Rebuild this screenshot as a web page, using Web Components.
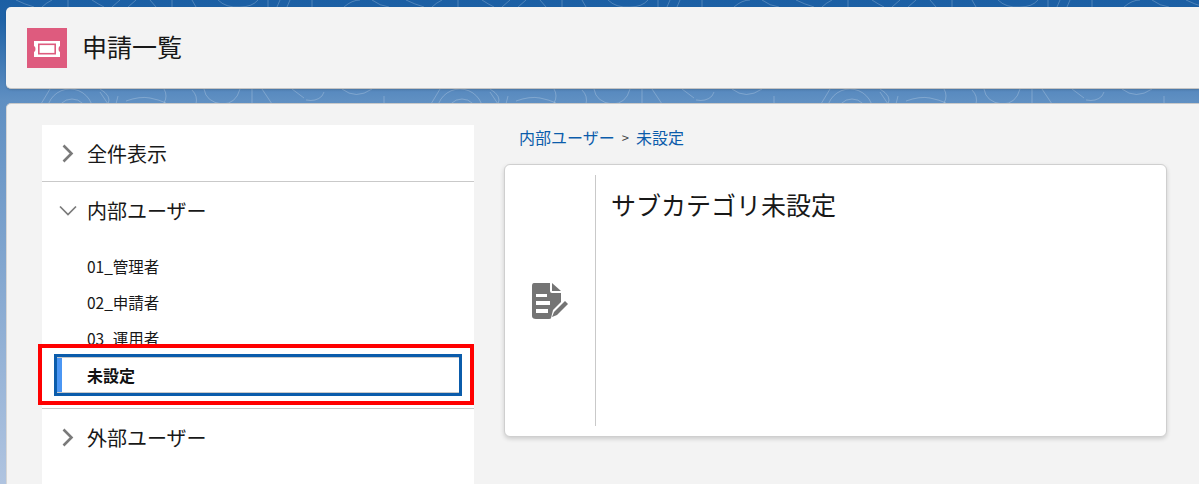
<!DOCTYPE html>
<html lang="ja">
<head>
<meta charset="utf-8">
<title>申請一覧</title>
<style>
  html, body { margin: 0; height: 484px; overflow: hidden; }
  body { font-family: "Noto Sans CJK JP", "Liberation Sans", sans-serif; color: #181818; }
</style>
</head>
<body>
<app-shell>
  <page-header slot="header" title-text="申請一覧"></page-header>
  <tree-nav slot="nav">
    <tree-group label="全件表示"></tree-group>
    <tree-group label="内部ユーザー" open>
      <tree-item>01_管理者</tree-item>
      <tree-item>02_申請者</tree-item>
      <tree-item>03_運用者</tree-item>
      <tree-item selected>未設定</tree-item>
    </tree-group>
    <tree-group label="外部ユーザー"></tree-group>
  </tree-nav>
  <bread-crumbs slot="content" parent="内部ユーザー" current="未設定"></bread-crumbs>
  <info-card slot="content" heading="サブカテゴリ未設定"></info-card>
</app-shell>

<script>
"use strict"
class AppShell extends HTMLElement {
    constructor() {
        super();
        this._root = this.attachShadow({ mode: "open" });
    }
    connectedCallback() {
        this._root.innerHTML = `
        <style>
            :host {
                display: block;
                position: relative;
                height: 484px;
                overflow: hidden;
                background: linear-gradient(180deg, #1b5fa4 0, #1f62a6 20px, #5f8fc2 100px, #b0c4e0 484px);
            }
            .bg { position: absolute; left: 0; top: 0; }
            .wrap {
                position: relative;
                display: flex;
                flex-direction: column;
                gap: 15px;
                padding: 7px 0 0 6px;
            }
            .main {
                display: flex;
                height: 400px;
                padding: 21px 32px 0 36px;
                background: #f3f3f3;
                border-top: 1px solid #c9c9c9;
                border-left: 1px solid #d5d5d5;
                border-radius: 5px 0 0 0;
                box-sizing: border-box;
                margin-top: -1px;
            }
            .nav { flex: none; width: 432px; margin-left: -1px; }
            .content { flex: none; width: 663px; margin-left: 30px; }
        </style>
        <svg class="bg" width="1199" height="110" fill="none" stroke="#fff" stroke-opacity=".22" stroke-width="1">
            <defs>
                <pattern id="swirl" width="390" height="110" patternUnits="userSpaceOnUse">
                    <path d="M16 0 Q24 4 34 7M42 7 Q46 3 52 0M68 0 V7M92 0 Q98 4 104 7M112 7 L120 0M128 7 L136 0M150 0 L156 7M172 0 V7M192 0 L196 7M218 0 Q226 8 240 7 Q252 7 258 0M268 0 V7M280 0 L277 7M290 0 L287 7M312 0 V7M344 7 Q352 0 360 0M372 0 Q380 6 389 7"/>
                    <circle cx="70" cy="112" r="23"/>
                    <circle cx="72" cy="114" r="15"/>
                    <path d="M41 104 L50 89M100 89 Q112 96 108 104 L100 92M116 104 L118 96M126 101 Q140 96 150 98 T166 103M164 89 Q168 96 164 103M192 90 Q198 96 196 104M204 89 Q206 102 222 104 Q236 104 240 89M252 89 V104M262 89 L272 104M292 89 L304 98 M306 100 Q316 102 322 96 L324 92M342 89 Q356 100 372 89M384 96 V104"/>
                </pattern>
            </defs>
            <rect width="1199" height="110" fill="url(#swirl)" stroke="none"/>
        </svg>
        <div class="wrap">
            <slot name="header"></slot>
            <div class="main">
                <div class="nav"><slot name="nav"></slot></div>
                <div class="content"><slot name="content"></slot></div>
            </div>
        </div>
        <red-frame></red-frame>
        `;
    }
}
window.customElements.define("app-shell", AppShell);

class PageHeader extends HTMLElement {
    constructor() {
        super();
        this._root = this.attachShadow({ mode: "open" });
    }
    connectedCallback() {
        this._root.innerHTML = `
        <style>
            :host {
                display: flex;
                align-items: center;
                gap: 15px;
                height: 82px;
                padding-left: 21px;
                box-sizing: border-box;
                background: #f3f3f3;
                border-radius: 5px 0 0 5px;
                border-bottom: 1px solid #c4c4c4;
                box-shadow: 0 1px 2px rgba(0,0,0,.15);
            }
            .icon { width: 40px; height: 40px; background: #de5b7e; display: block; flex: none; }
            h1 { margin: 0; font-size: 25px; font-weight: 400; line-height: 36px; color: #181818; position: relative; top: -2px; }
        </style>
        <svg class="icon" viewBox="0 0 40 40">
            <path fill="#fff" d="M7 13 H33 V18 Q31.5 18.5 31.5 21 Q31.5 23.5 33 24 V29 H7 V24 Q8.5 23.5 8.5 21 Q8.5 18.5 7 18 Z"/>
            <rect x="11.8" y="16.3" width="16.4" height="9.4" fill="#fff" stroke="#de5b7e" stroke-width="1.6"/>
        </svg>
        <h1>${this.getAttribute("title-text")}</h1>
        `;
    }
}
window.customElements.define("page-header", PageHeader);

class TreeNav extends HTMLElement {
    constructor() {
        super();
        this._root = this.attachShadow({ mode: "open" });
    }
    connectedCallback() {
        this._root.innerHTML = `
        <style>
            :host { display: block; background: #fff; height: 359px; }
        </style>
        <slot></slot>
        `;
    }
}
window.customElements.define("tree-nav", TreeNav);

class TreeGroup extends HTMLElement {
    constructor() {
        super();
        this._root = this.attachShadow({ mode: "open" });
    }
    connectedCallback() {
        const open = this.hasAttribute("open");
        const chevron = open
            ? `<svg class="chev" viewBox="0 0 20 20"><path d="M2 6.5 L10 14.5 L18 6.5" fill="none" stroke="#7a7a7a" stroke-width="1.7"/></svg>`
            : `<svg class="chev" viewBox="0 0 20 20"><path d="M5.5 2.5 L13.5 10.5 L5.5 18.5" fill="none" stroke="#7a7a7a" stroke-width="2.6"/></svg>`;
        this._root.innerHTML = `
        <style>
            :host { display: block; border-bottom: 1px solid #c9c9c9; }
            :host(:last-child) { border-bottom: 0; }
            .head {
                display: flex;
                align-items: center;
                height: 56px;
                padding-left: 16px;
                font-size: 20px;
                color: #181818;
            }
            .chev { width: 20px; height: 20px; flex: none; margin-right: 9px; }
            .list { padding: 11px 0 15px; ${open ? "" : "display: none;"} }
        </style>
        <div class="head">${chevron}<span>${this.getAttribute("label")}</span></div>
        <div class="list"><slot></slot></div>
        `;
    }
}
window.customElements.define("tree-group", TreeGroup);

class TreeItem extends HTMLElement {
    constructor() {
        super();
        this._root = this.attachShadow({ mode: "open" });
    }
    connectedCallback() {
        this._root.innerHTML = `
        <style>
            :host {
                display: flex;
                align-items: center;
                height: 36px;
                box-sizing: border-box;
                padding: 0 0 2px 45px;
                font-size: 15.5px;
                color: #181818;
            }
            :host([selected]) {
                position: relative;
                margin: 0 15px;
                padding: 0 0 0 30px;
                height: 36px;
                font-size: 16px;
                font-weight: 700;
                color: #111;
                background: #fff;
                border-top: 1px solid #c9c9c9;
                border-bottom: 1px solid #c9c9c9;
                outline: 3px solid #0b5cab;
            }
            .bar { display: none; }
            :host([selected]) .bar {
                display: block;
                position: absolute;
                left: 0;
                top: 0;
                bottom: 0;
                width: 5px;
                background: #4b96f3;
            }
        </style>
        <span class="bar"></span>
        <slot></slot>
        `;
    }
}
window.customElements.define("tree-item", TreeItem);

class BreadCrumbs extends HTMLElement {
    constructor() {
        super();
        this._root = this.attachShadow({ mode: "open" });
    }
    connectedCallback() {
        this._root.innerHTML = `
        <style>
            :host {
                display: flex;
                align-items: center;
                height: 24px;
                margin-bottom: 15px;
                padding-left: 15px;
                font-size: 16px;
                color: #0b5cab;
            }
            .sep { color: #444; font-size: 13px; margin: 0 7px; }
        </style>
        <span>${this.getAttribute("parent")}</span><span class="sep">&gt;</span><span>${this.getAttribute("current")}</span>
        `;
    }
}
window.customElements.define("bread-crumbs", BreadCrumbs);

class InfoCard extends HTMLElement {
    constructor() {
        super();
        this._root = this.attachShadow({ mode: "open" });
    }
    connectedCallback() {
        this._root.innerHTML = `
        <style>
            :host {
                display: flex;
                height: 273px;
                box-sizing: border-box;
                padding: 10px 0;
                background: #fff;
                border: 1px solid #cfcfcf;
                border-radius: 6px;
                box-shadow: 0 2px 4px rgba(0,0,0,.16);
            }
            .side {
                flex: none;
                width: 90px;
                display: flex;
                align-items: center;
                justify-content: center;
                border-right: 1px solid #c9c9c9;
            }
            .side svg { width: 38px; height: 38px; display: block; }
            h2 {
                margin: 0;
                padding: 9px 0 0 15px;
                font-size: 25px;
                font-weight: 400;
                line-height: 40px;
                color: #181818;
            }
        </style>
        <div class="side">
            <svg viewBox="0 0 38 38">
                <path fill="#747474" d="M3 1 H19 V9 Q19 11 21 11 H30 V20 L22 28 L20 36 Q20 37 18 37 H5 Q1 37 1 34 V4 Q1 1 3 1 Z"/>
                <path fill="#747474" d="M21 1 L30 9 H21 Z"/>
                <path fill="#fff" d="M5 12 H16 V15 H5 Z M5 19 H19 V23 H5 Z M5 27 H17 V31 H5 Z"/>
                <path fill="#747474" d="M34 19 L37 22 L26 33 L21 35 L23 30 Z"/>
            </svg>
        </div>
        <h2>${this.getAttribute("heading")}</h2>
        `;
    }
}
window.customElements.define("info-card", InfoCard);

// annotation drawn over the screenshot
class RedFrame extends HTMLElement {
    constructor() {
        super();
        this._root = this.attachShadow({ mode: "open" });
    }
    connectedCallback() {
        this._root.innerHTML = `
        <style>
            :host {
                position: absolute;
                left: 38px;
                top: 344px;
                width: 436px;
                height: 61px;
                box-sizing: border-box;
                border: 4px solid #f00;
            }
        </style>
        `;
    }
}
window.customElements.define("red-frame", RedFrame);
</script>
</body>
</html>
